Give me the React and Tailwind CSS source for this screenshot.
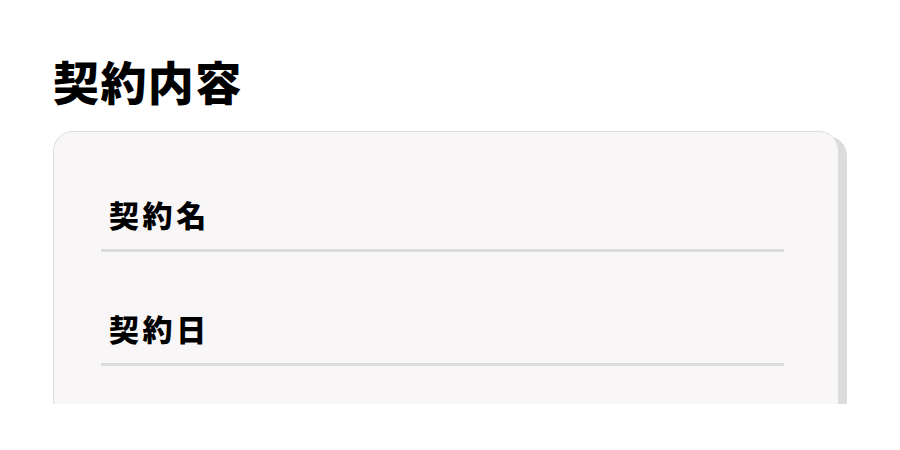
export default function App() {
  const font = { fontFamily: '"Noto Sans CJK JP", "Noto Sans", sans-serif' };
  return (
    <div className="w-[900px] h-[450px] bg-white overflow-hidden" style={font}>
      <div className="pl-[53px] pt-[57px]">
        <h1 className="text-[46px] leading-none font-black text-black tracking-[0.03em] h-[46px]">契約内容</h1>
        <div className="mt-[28px] w-[800px] h-[273px] overflow-hidden">
          <div className="w-[786px] h-[290px] rounded-[20px] border border-[#dddddd] bg-[#f8f6f7] shadow-[8px_5px_0_#dcdcdc] pt-[67px] pl-[47px] pr-[54px]">
            <div className="flex flex-col gap-[61px]">
              <div className="border-b-[3px] border-[#dcdcdc] pl-[8px] pb-[20px]">
                <div className="text-[30px] leading-none font-black text-black tracking-[0.12em]">契約名</div>
              </div>
              <div className="border-b-[3px] border-[#dcdcdc] pl-[8px] pb-[20px]">
                <div className="text-[30px] leading-none font-black text-black tracking-[0.12em]">契約日</div>
              </div>
            </div>
          </div>
        </div>
      </div>
    </div>
  );
}
